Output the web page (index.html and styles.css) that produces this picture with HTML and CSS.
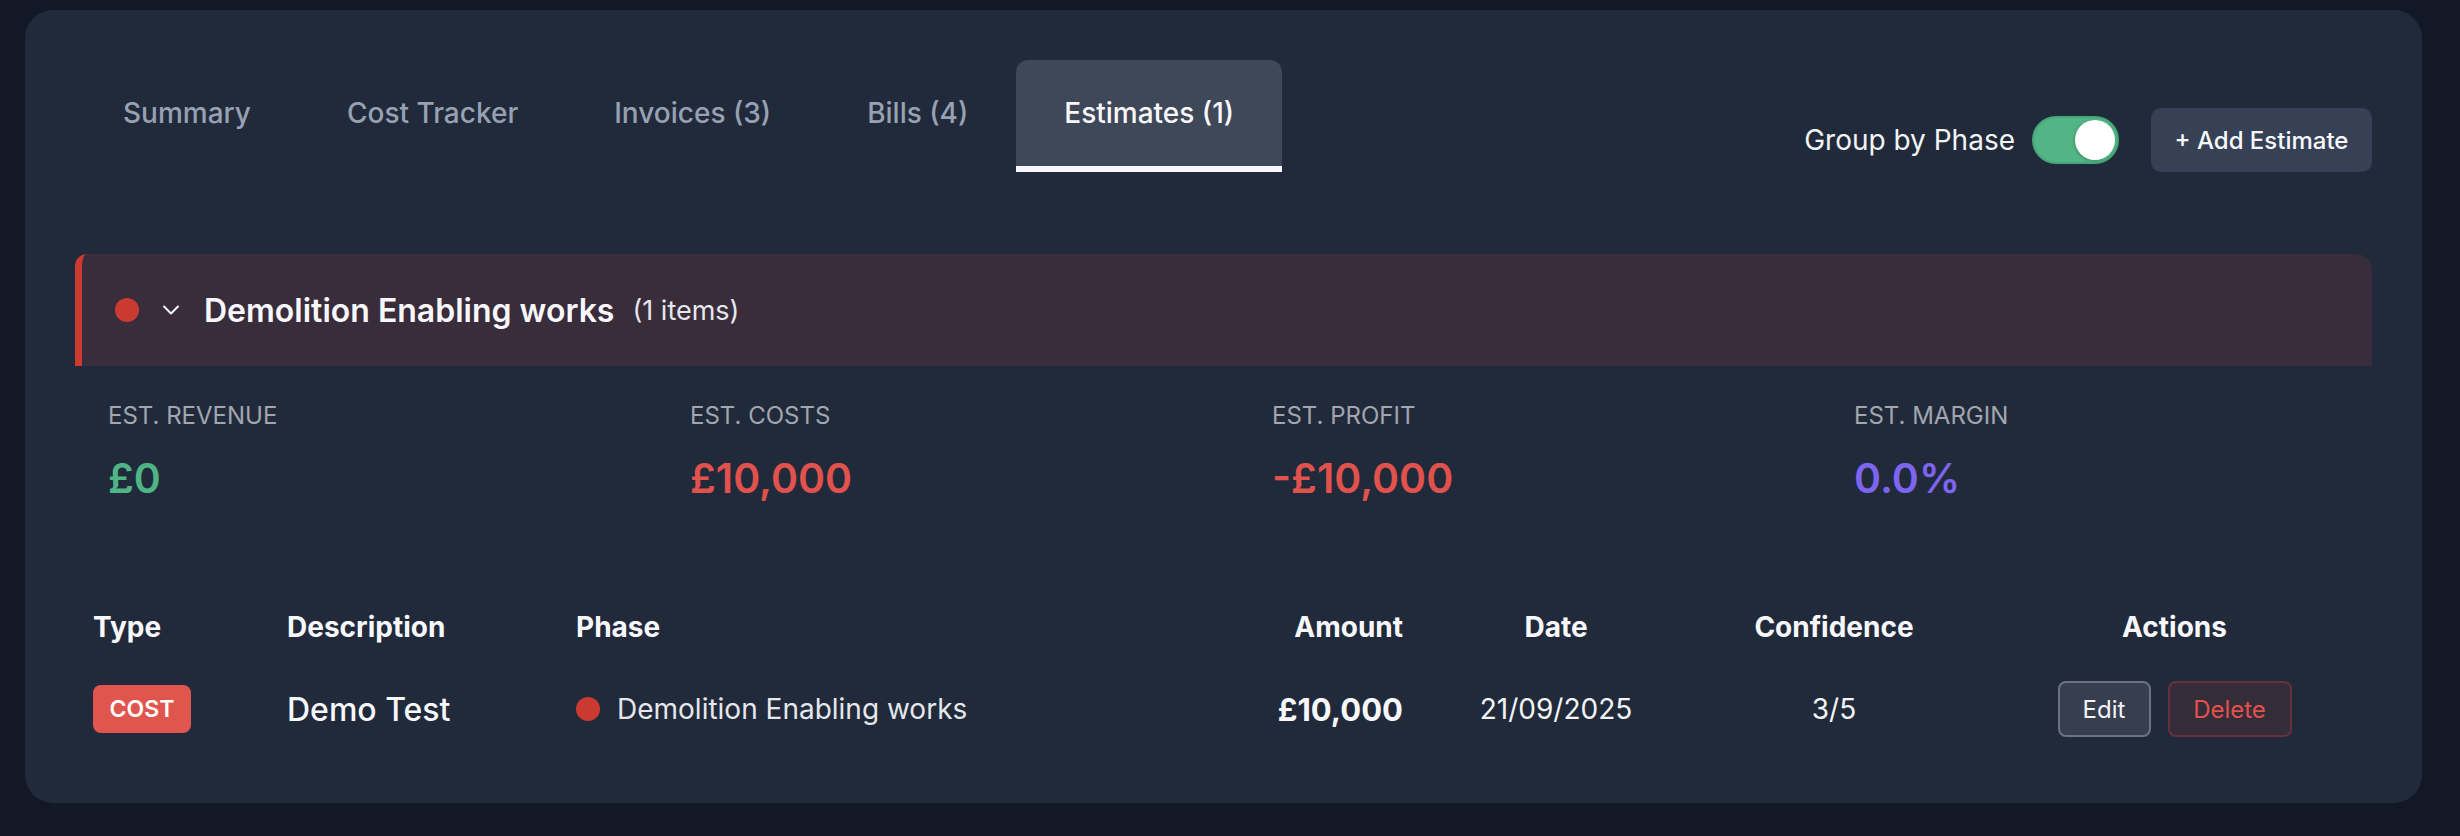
FILE: index.html
```html
<!DOCTYPE html>
<html lang="en">
<head>
<meta charset="utf-8">
<title>Estimates</title>
<link rel="stylesheet" href="styles.css">
</head>
<body>
<div class="card">
  <div class="toolbar">
    <nav class="tabs">
      <div class="tab">Summary</div>
      <div class="tab">Cost Tracker</div>
      <div class="tab">Invoices (3)</div>
      <div class="tab">Bills (4)</div>
      <div class="tab active">Estimates (1)</div>
    </nav>
    <div class="controls">
      <span class="group-label">Group by Phase</span>
      <span class="toggle"><span class="knob"></span></span>
      <button class="add-btn">+ Add Estimate</button>
    </div>
  </div>

  <div class="phase-header">
    <span class="dot"></span>
    <svg class="chevron" viewBox="0 0 20 12" width="20" height="12"><path d="M3 2.5 L10 9.5 L17 2.5" fill="none" stroke="#f3f4f6" stroke-width="2" stroke-linecap="round" stroke-linejoin="round"/></svg>
    <span class="phase-title">Demolition Enabling works</span>
    <span class="phase-count">(1 items)</span>
  </div>

  <div class="stats">
    <div class="stat">
      <div class="stat-label">EST. REVENUE</div>
      <div class="stat-value green">£0</div>
    </div>
    <div class="stat">
      <div class="stat-label">EST. COSTS</div>
      <div class="stat-value red">£10,000</div>
    </div>
    <div class="stat">
      <div class="stat-label">EST. PROFIT</div>
      <div class="stat-value red">-£10,000</div>
    </div>
    <div class="stat">
      <div class="stat-label">EST. MARGIN</div>
      <div class="stat-value purple">0.0%</div>
    </div>
  </div>

  <div class="table">
    <div class="row head">
      <div class="cell">Type</div>
      <div class="cell">Description</div>
      <div class="cell">Phase</div>
      <div class="cell right">Amount</div>
      <div class="cell center">Date</div>
      <div class="cell center">Confidence</div>
      <div class="cell center">Actions</div>
    </div>
    <div class="row body">
      <div class="cell"><span class="badge">COST</span></div>
      <div class="cell desc">Demo Test</div>
      <div class="cell phase"><span class="dot small"></span>Demolition Enabling works</div>
      <div class="cell right amount">£10,000</div>
      <div class="cell center">21/09/2025</div>
      <div class="cell center">3/5</div>
      <div class="cell center actions">
        <button class="btn edit">Edit</button>
        <button class="btn delete">Delete</button>
      </div>
    </div>
  </div>
</div>
</body>
</html>
```

FILE: styles.css
```css
* { box-sizing: border-box; }
html, body { height: 100%; }
body {
  margin: 0;
  padding: 10px 38px 0 25px;
  background: #131827;
  font-family: Inter, "Noto Sans", "Liberation Sans", sans-serif;
  color: #f3f4f6;
}
.card {
  background: #212a3b;
  border-radius: 28px;
  padding: 50px 50px 47px 50px;
  height: 793px;
}
.toolbar {
  display: flex;
  justify-content: space-between;
  align-items: flex-end;
}
.tabs { display: flex; }
.tab {
  height: 112px;
  padding: 0 48px;
  display: flex;
  align-items: center;
  font-size: 28px;
  font-weight: 500;
  color: #97a1b2;
  border-bottom: 6px solid transparent;
  border-radius: 12px 12px 0 0;
}
.tab.active {
  background: #3f4858;
  color: #f8f8fc;
  border-bottom-color: #f8f8fc;
}
.controls {
  display: flex;
  align-items: center;
  height: 64px;
}
.group-label {
  font-size: 28px;
  color: #f3f4f6;
  margin-right: 17px;
}
.toggle {
  width: 87px;
  height: 48px;
  border-radius: 24px;
  background: #52b585;
  border: 2px solid #47a677;
  display: flex;
  justify-content: flex-end;
  align-items: center;
  padding: 2px;
  margin-right: 32px;
}
.knob {
  width: 40px;
  height: 40px;
  border-radius: 50%;
  background: #ffffff;
  box-shadow: -1px 1px 3px rgba(0,0,0,0.2);
}
.add-btn {
  height: 64px;
  width: 221px;
  border: none;
  border-radius: 10px;
  background: #374155;
  color: #f8f8fc;
  font-family: inherit;
  font-size: 24px;
  font-weight: 500;
}
.phase-header {
  margin-top: 82px;
  height: 112px;
  background: #392c3b;
  border-left: 7px solid #cf3a30;
  border-radius: 12px 16px 0 0;
  display: flex;
  align-items: center;
  padding-left: 33px;
}
.dot {
  width: 24px;
  height: 24px;
  border-radius: 50%;
  background: #cb3a30;
  flex: none;
}
.chevron { margin-left: 22px; margin-right: 23px; flex: none; }
.phase-title {
  font-size: 32px;
  font-weight: 600;
  color: #f8f8fc;
}
.phase-count {
  font-size: 27px;
  color: #e5e7eb;
  margin-left: 18px;
}
.stats {
  display: grid;
  grid-template-columns: 582px 582px 582px 1fr;
  padding: 35px 33px 0;
}
.stat-label {
  font-size: 24px;
  color: #a1a6af;
}
.stat-value {
  margin-top: 23px;
  font-size: 41px;
  font-weight: 600;
}
.green { color: #4fb584; }
.red { color: #e0524b; }
.purple { color: #7e65ef; }
.table { margin-top: 90px; }
.row {
  display: grid;
  grid-template-columns: 194px 289px 682px 181px 270px 286px 1fr;
  align-items: center;
}
.row.head { height: 68px; }
.row.body { height: 96px; }
.cell {
  padding: 0 18px;
  font-size: 28px;
  color: #f3f4f6;
  display: flex;
  align-items: center;
}
.head .cell { font-weight: 700; color: #f8f8fc; }
.cell.right { justify-content: flex-end; }
.cell.center { justify-content: center; }
.badge {
  display: inline-flex;
  align-items: center;
  justify-content: center;
  width: 98px;
  height: 48px;
  border-radius: 8px;
  background: #e0564e;
  color: #ffffff;
  font-size: 23px;
  font-weight: 600;
}
.desc { font-size: 32px; font-weight: 500; color: #f8f8fc; }
.phase .dot.small { margin-right: 17px; }
.phase { color: #e5e7eb; }
.amount { font-size: 31px; font-weight: 700; color: #f8f8fc; }
.actions { gap: 17px; }
.btn {
  height: 56px;
  border-radius: 8px;
  font-family: inherit;
  font-size: 24px;
  padding: 0;
}
.btn.edit {
  width: 93px;
  background: #363e4f;
  border: 2px solid #6b7280;
  color: #f3f4f6;
}
.btn.delete {
  width: 124px;
  background: #352c3a;
  border: 2px solid #68303a;
  color: #e0524b;
}
```
